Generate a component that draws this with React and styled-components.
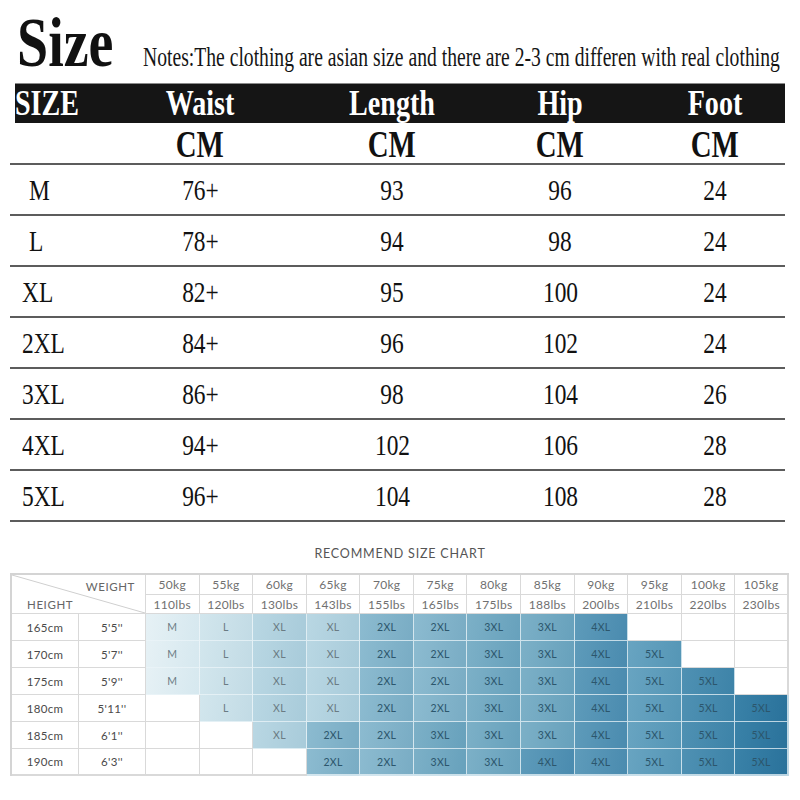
import styled, { createGlobalStyle } from 'styled-components';

const GlobalStyle = createGlobalStyle`
  html, body {
    margin: 0;
    padding: 0;
    background: #fff;
  }
  body {
    font-family: "Liberation Serif", "Times New Roman", serif;
    color: #111;
  }
`;

const Page = styled.div`
  width: 800px;
  height: 800px;
  overflow: hidden;
  background: #fff;
`;

// the source picture is squeezed sideways, so text is narrowed to match
const Squeeze = styled.span`
  display: inline-block;
  white-space: nowrap;
  transform: scaleX(${({ $sx }) => $sx || 0.78});
  transform-origin: ${({ $origin }) => $origin || 'center'};
`;

const Heading = styled.div`
  display: flex;
  align-items: baseline;
  height: 75px;
  padding: 8px 0 0 17px;
  white-space: nowrap;
`;

const Title = styled.div`
  flex: 0 0 126px;
  font-size: 70px;
  line-height: 70px;
  font-weight: 700;
`;

const Notes = styled.div`
  font-size: 27px;
  line-height: 30px;
  color: #151515;
`;

const SizeTable = styled.div`
  margin-left: 10px;
  width: 775px;
`;

const HeadBar = styled.div`
  display: grid;
  grid-template-columns: 95px 180px 204px 132px 1fr;
  margin-left: 5px;
  height: 40px;
  background: #151515;
  border-top: 1px solid #8a8a8a;
  box-sizing: border-box;
  color: #fff;
  font-size: 36px;
  font-weight: 700;
  line-height: 39px;
`;

const Row = styled.div`
  display: grid;
  grid-template-columns: 100px 180px 204px 132px 1fr;
  height: ${({ $h }) => $h || 49}px;
  border-bottom: 2px solid #5c5c5c;
  font-size: ${({ $bold }) => ($bold ? 37 : 30)}px;
  font-weight: ${({ $bold }) => ($bold ? 700 : 400)};
  line-height: ${({ $h }) => ($h ? $h + 4 : 49)}px;
`;

const Cell = styled.div`
  text-align: center;

  &:last-child {
    padding-left: 18px;
  }
`;

const FirstCell = styled.div`
  text-align: left;
  padding-left: ${({ $indent }) => ($indent ? 19 : 12)}px;
`;

const BarFirst = styled.div`
  text-align: left;
`;

const ChartTitle = styled.div`
  height: 51px;
  box-sizing: border-box;
  padding-top: 25px;
  text-align: center;
  font-family: Lato, "Noto Sans", sans-serif;
  font-size: 12.5px;
  line-height: 14px;
  letter-spacing: 0.8px;
  color: #555;
`;

const Chart = styled.div`
  display: grid;
  grid-template-columns: 67px 67px repeat(12, 1fr);
  grid-template-rows: 20px 19px repeat(6, 27px);
  margin-left: 10px;
  width: 779px;
  box-sizing: border-box;
  border-top: 2px solid #d4d4d4;
  border-left: 2px solid #d4d4d4;
  font-family: Lato, "Noto Sans", sans-serif;
`;

const Corner = styled.div`
  grid-column: 1 / span 2;
  grid-row: 1 / span 2;
  position: relative;
  display: grid;
  grid-template-rows: 1fr 1fr;
  padding: 3px 10px 0 15px;
  border-right: 1px solid #d9d9d9;
  border-bottom: 1px solid #d9d9d9;
  font-size: 11.5px;
  letter-spacing: 0.6px;
  color: #666;
`;

const Diagonal = styled.svg`
  position: absolute;
  inset: 0;
  width: 100%;
  height: 100%;
`;

const CornerTop = styled.span`
  justify-self: end;
  align-self: center;
`;

const CornerBottom = styled.span`
  justify-self: start;
  align-self: center;
`;

const ChartCell = styled.div`
  display: flex;
  align-items: center;
  justify-content: center;
  border-right: ${({ $last }) => ($last ? 2 : 1)}px solid
    ${({ $bg }) => ($bg ? 'rgba(235, 244, 248, 0.75)' : '#d9d9d9')};
  border-bottom: ${({ $bottom }) => ($bottom ? 2 : 1)}px solid
    ${({ $bg }) => ($bg ? 'rgba(235, 244, 248, 0.75)' : '#d9d9d9')};
  background: ${({ $bg }) =>
    $bg ? `linear-gradient(100deg, ${$bg[0]} 0%, ${$bg[1]} 100%)` : '#fff'};
  font-size: ${({ $size }) => $size || 11}px;
  color: ${({ $ink }) => $ink || '#707070'};
  letter-spacing: 0.3px;
`;

const sizeRows = [
  ['M', '76+', '93', '96', '24', true],
  ['L', '78+', '94', '98', '24', true],
  ['XL', '82+', '95', '100', '24'],
  ['2XL', '84+', '96', '102', '24'],
  ['3XL', '86+', '98', '104', '26'],
  ['4XL', '94+', '102', '106', '28'],
  ['5XL', '96+', '104', '108', '28'],
];

const weights = [
  ['50kg', '110lbs'],
  ['55kg', '120lbs'],
  ['60kg', '130lbs'],
  ['65kg', '143lbs'],
  ['70kg', '155lbs'],
  ['75kg', '165lbs'],
  ['80kg', '175lbs'],
  ['85kg', '188lbs'],
  ['90kg', '200lbs'],
  ['95kg', '210lbs'],
  ['100kg', '220lbs'],
  ['105kg', '230lbs'],
];

const heights = [
  ['165cm', "5'5''", ['M', 'L', 'XL', 'XL', '2XL', '2XL', '3XL', '3XL', '4XL', '', '', '']],
  ['170cm', "5'7''", ['M', 'L', 'XL', 'XL', '2XL', '2XL', '3XL', '3XL', '4XL', '5XL', '', '']],
  ['175cm', "5'9''", ['M', 'L', 'XL', 'XL', '2XL', '2XL', '3XL', '3XL', '4XL', '5XL', '5XL', '']],
  ['180cm', "5'11''", ['', 'L', 'XL', 'XL', '2XL', '2XL', '3XL', '3XL', '4XL', '5XL', '5XL', '5XL']],
  ['185cm', "6'1''", ['', '', 'XL', '2XL', '2XL', '3XL', '3XL', '3XL', '4XL', '5XL', '5XL', '5XL']],
  ['190cm', "6'3''", ['', '', '', '2XL', '2XL', '3XL', '3XL', '4XL', '4XL', '5XL', '5XL', '5XL']],
];

const shades = {
  M: ['#e6f1f5', '#d6e8ef'],
  L: ['#d2e6ed', '#c2dbe5'],
  XL: ['#b9d7e3', '#a8cbda'],
  '2XL': ['#8cbbd0', '#79acc4'],
  '3XL': ['#7cb0c7', '#67a1bc'],
  '4XL': ['#5e9bba', '#4a8baf'],
};

const fiveXL = [
  ['#68a4c1', '#5596b6'],
  ['#4f91b3', '#3d83a8'],
  ['#3a82a8', '#2a729b'],
];

function shadeFor(size, col) {
  if (!size) return null;
  if (size === '5XL') return fiveXL[col - 9];
  return shades[size];
}

function inkFor(size) {
  if (size === 'M' || size === 'L' || size === 'XL') return '#6a7b83';
  return '#2c566c';
}

function App() {
  return (
    <Page>
      <GlobalStyle />
      <Heading>
        <Title>
          <Squeeze $sx={0.8} $origin="left">Size</Squeeze>
        </Title>
        <Notes>
          <Squeeze $sx={0.727} $origin="left">
            Notes:The clothing are asian size and there are 2-3 cm differen with real clothing
          </Squeeze>
        </Notes>
      </Heading>

      <SizeTable>
        <HeadBar>
          <BarFirst>
            <Squeeze $origin="left">SIZE</Squeeze>
          </BarFirst>
          {['Waist', 'Length', 'Hip', 'Foot'].map((label) => (
            <Cell key={label}>
              <Squeeze>{label}</Squeeze>
            </Cell>
          ))}
        </HeadBar>

        <Row $bold $h={40}>
          <FirstCell />
          {['w', 'l', 'h', 'f'].map((key) => (
            <Cell key={key}>
              <Squeeze>CM</Squeeze>
            </Cell>
          ))}
        </Row>

        {sizeRows.map(([size, waist, length, hip, foot, indent]) => (
          <Row key={size}>
            <FirstCell $indent={indent}>
              <Squeeze $origin="left">{size}</Squeeze>
            </FirstCell>
            {[waist, length, hip, foot].map((value, i) => (
              <Cell key={i}>
                <Squeeze>{value}</Squeeze>
              </Cell>
            ))}
          </Row>
        ))}
      </SizeTable>

      <ChartTitle>RECOMMEND SIZE CHART</ChartTitle>

      <Chart>
        <Corner>
          <Diagonal viewBox="0 0 100 100" preserveAspectRatio="none">
            <line x1="0" y1="0" x2="100" y2="100" stroke="#cfcfcf" strokeWidth="1" vectorEffect="non-scaling-stroke" />
          </Diagonal>
          <CornerTop>WEIGHT</CornerTop>
          <CornerBottom>HEIGHT</CornerBottom>
        </Corner>

        {weights.map(([kg], i) => (
          <ChartCell key={kg} $last={i === 11} $size={12}>
            {kg}
          </ChartCell>
        ))}
        {weights.map(([kg, lbs], i) => (
          <ChartCell key={lbs} $last={i === 11} $size={12}>
            {lbs}
          </ChartCell>
        ))}

        {heights.map(([cm, ft, sizes], r) => {
          const bottom = r === heights.length - 1;
          return [
            <ChartCell key={cm} $bottom={bottom} $ink="#4a4a4a" $size={11.5}>
              {cm}
            </ChartCell>,
            <ChartCell key={ft} $bottom={bottom} $ink="#4a4a4a" $size={11.5}>
              {ft}
            </ChartCell>,
            ...sizes.map((size, c) => (
              <ChartCell
                key={`${cm}-${c}`}
                $bottom={bottom}
                $last={c === 11}
                $bg={shadeFor(size, c)}
                $ink={inkFor(size)}
                $size={10.5}
              >
                {size}
              </ChartCell>
            )),
          ];
        })}
      </Chart>
    </Page>
  );
}

export default App;
